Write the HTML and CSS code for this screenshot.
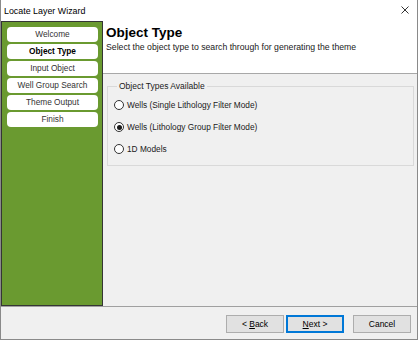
FILE: index.html
```html
<!DOCTYPE html>
<html lang="en">
<head>
    <meta charset="UTF-8">
    <title>Locate Layer Wizard</title>
    <link rel="stylesheet" href="styles.css">
</head>
<body>
    <div class="window">
        <!-- タイトルバー -->
        <div class="titlebar">
            <span class="title">Locate Layer Wizard</span>
            <svg class="close" width="8" height="8" viewBox="0 0 8 8">
                <path d="M0.5 0.5 L7.5 7.5 M7.5 0.5 L0.5 7.5" stroke="#333" stroke-width="1" fill="none"/>
            </svg>
        </div>

        <div class="main">
            <!-- ステップ一覧 -->
            <div class="sidebar">
                <div class="step">Welcome</div>
                <div class="step current">Object Type</div>
                <div class="step">Input Object</div>
                <div class="step">Well Group Search</div>
                <div class="step">Theme Output</div>
                <div class="step">Finish</div>
            </div>

            <div class="content">
                <div class="header">
                    <h1>Object Type</h1>
                    <p class="desc">Select the object type to search through for generating the theme</p>
                </div>

                <div class="body">
                    <fieldset class="group">
                        <legend>Object Types Available</legend>
                        <div class="option"><span class="radio"></span>Wells (Single Lithology Filter Mode)</div>
                        <div class="option"><span class="radio checked"></span>Wells (Lithology Group Filter Mode)</div>
                        <div class="option"><span class="radio"></span>1D Models</div>
                    </fieldset>
                </div>
            </div>
        </div>

        <!-- ボタン -->
        <div class="footer">
            <button class="btn">&lt; <u>B</u>ack</button>
            <button class="btn focus"><u>N</u>ext &gt;</button>
            <button class="btn cancel">Cancel</button>
        </div>
    </div>
</body>
</html>
```

FILE: styles.css
```css
/* 全体 */
body {
    margin: 0;
    padding: 0;
    font-family: 'Liberation Sans', Arial, sans-serif;
    font-size: 8.5px;
    color: #1a1a1a;
    background-color: #f0f0f0;
}

.window {
    width: 418px;
    height: 340px;
    box-sizing: border-box;
    border: 1px solid #8a8a8a;
    border-top: none;
    background-color: #f0f0f0;
    display: flex;
    flex-direction: column;
}

.titlebar {
    height: 21px;
    background-color: white;
    display: flex;
    align-items: center;
    justify-content: space-between;
    padding: 0 8px 0 3px;
    flex-shrink: 0;
}

.title {
    font-size: 8.9px;
    color: #000;
}

.close {
    display: block;
    margin-top: -1px;
}

.main {
    height: 285px;
    display: flex;
    flex-shrink: 0;
}

/* 左側のステップ */
.sidebar {
    width: 102px;
    box-sizing: border-box;
    background-color: #6a9a30;
    border: 1px solid #353535;
    padding: 5px 4px 0 5px;
    display: flex;
    flex-direction: column;
    gap: 2px;
}

.step {
    height: 15px;
    line-height: 15px;
    background-color: white;
    border-radius: 4px;
    text-align: center;
    font-size: 8.3px;
    color: #333;
}

.step.current {
    font-weight: bold;
    color: #000;
}

.content {
    flex: 1;
    display: flex;
    flex-direction: column;
}

.header {
    height: 53px;
    box-sizing: border-box;
    background-color: white;
    border-bottom: 1px solid #a8a8a8;
    padding: 4px 0 0 3px;
}

h1 {
    margin: 0;
    font-size: 13.5px;
    line-height: 16px;
    font-weight: bold;
    color: #000;
}

.desc {
    margin: 1px 0 0 0;
    font-size: 8.7px;
    line-height: 11px;
    color: #1a1a1a;
}

.body {
    flex: 1;
    padding: 7px 3px 0 4px;
}

.group {
    margin: 0;
    border: 1px solid #d9d9d9;
    padding: 3px 6px 5px 6px;
}

.group legend {
    padding: 0 2px;
    margin-left: 3px;
    line-height: 10px;
    font-size: 8.5px;
}

.option {
    height: 22px;
    display: flex;
    align-items: center;
    gap: 3px;
    font-size: 8.3px;
}

.radio {
    width: 10px;
    height: 10px;
    box-sizing: border-box;
    border: 1px solid #333;
    border-radius: 50%;
    background-color: white;
    display: flex;
    align-items: center;
    justify-content: center;
}

.radio.checked::after {
    content: "";
    width: 5px;
    height: 5px;
    border-radius: 50%;
    background-color: #1a1a1a;
}

/* 下部ボタン */
.footer {
    flex: 1;
    border-top: 1px solid #a0a0a0;
    display: flex;
    justify-content: flex-end;
    align-items: flex-start;
    padding: 8px 6px 0 0;
    gap: 2px;
}

.btn {
    width: 58px;
    height: 18px;
    box-sizing: border-box;
    background-color: #e1e1e1;
    border: 1px solid #adadad;
    font-family: 'Liberation Sans', Arial, sans-serif;
    font-size: 8.5px;
    color: #000;
    padding: 0;
}

.btn.focus {
    border-color: #0078d7;
    box-shadow: inset 0 0 0 1px #0078d7;
}

.btn.cancel {
    margin-left: 7px;
}
```
